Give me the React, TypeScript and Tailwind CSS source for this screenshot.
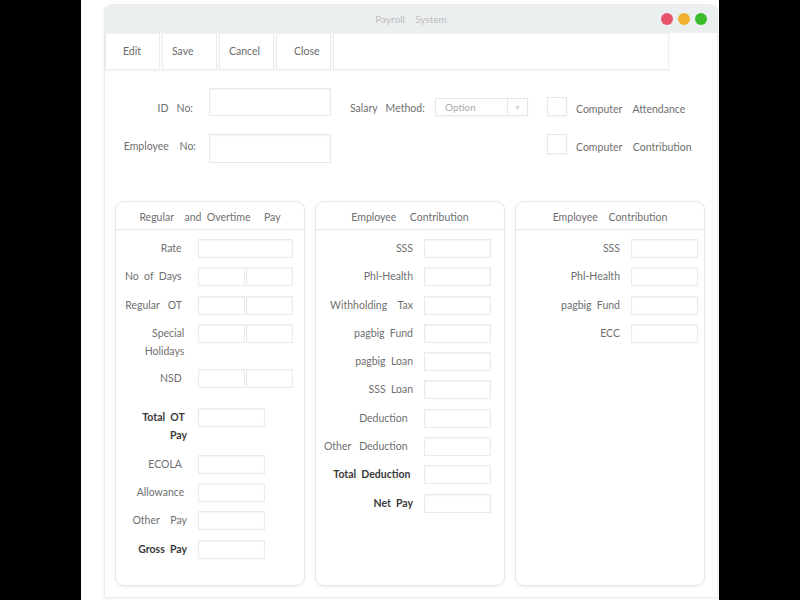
const font = { fontFamily: "Lato, 'Open Sans', sans-serif" };

type Row = {
  label: string;
  bold?: boolean;
  lines?: number;
  split?: boolean;
  small?: boolean;
  extra?: string;
};

const Box = ({ className }: { className: string }) => (
  <div
    className={`h-[19px] border border-[#ebebeb] bg-white shadow-[inset_0_1px_2px_rgba(0,0,0,0.05)] ${className}`}
  />
);

const regularRows: Row[] = [
  { label: "Rate  " },
  { label: "No  of  Days  ", split: true },
  { label: "Regular   OT  ", split: true },
  { label: "Special \nHolidays ", split: true, lines: 2 },
  { label: "NSD  ", split: true },
  { label: "Total  OT \n      Pay", bold: true, lines: 2, small: true, extra: "mt-[11px]" },
  { label: "ECOLA  ", small: true, extra: "mt-[1px]" },
  { label: "Allowance ", small: true },
  { label: "Other    Pay", small: true },
  { label: "Gross  Pay", bold: true, small: true },
];

const contributionRows: Row[] = [
  { label: "SSS" },
  { label: "Phl-Health" },
  { label: "Withholding    Tax" },
  { label: "pagbig  Fund" },
  { label: "pagbig  Loan" },
  { label: "SSS  Loan" },
  { label: "Deduction  " },
  { label: "Other   Deduction  " },
  { label: "Total  Deduction " },
  { label: "Net  Pay", bold: true },
];

const employerRows: Row[] = [
  { label: "SSS" },
  { label: "Phl-Health" },
  { label: "pagbig  Fund" },
  { label: "ECC" },
];

const Panel = ({
  title,
  rows,
  labelWidth,
  fieldWidth,
}: {
  title: string;
  rows: Row[];
  labelWidth: string;
  fieldWidth: string;
}) => (
  <div className="flex h-[385px] w-[190px] flex-col rounded-[9px] border border-[#e9e9e9] bg-white shadow-[0_1px_3px_rgba(0,0,0,0.07)]">
    <div className="flex h-[28px] items-center justify-center whitespace-pre border-b border-[#ebebeb] pt-[4px] text-[10.5px] text-[#6f6f6f]">
      {title}
    </div>
    <div className="flex flex-col gap-[9.3px] pt-[9px]">
      {rows.map((row) => (
        <div key={row.label} className={`flex items-start ${row.extra ?? ""}`}>
          <div
            className={`${labelWidth} shrink-0 whitespace-pre pr-[11px] text-right text-[10.5px] ${row.lines === 2 ? "leading-[18px]" : "leading-[19px]"} ${row.bold || row.label.startsWith("Total") ? "font-bold text-[#3a3a3a]" : "text-[#6f6f6f]"}`}
          >
            {row.label}
          </div>
          {row.split ? (
            <div className="flex gap-px">
              <Box className="w-[47px]" />
              <Box className="w-[47px]" />
            </div>
          ) : (
            <Box className={row.small ? "w-[67px]" : fieldWidth} />
          )}
        </div>
      ))}
    </div>
  </div>
);

const toolbar = [
  { name: "Edit", pad: "pl-[17px]" },
  { name: "Save", pad: "pl-[9px]" },
  { name: "Cancel", pad: "pl-[9px]" },
  { name: "Close", pad: "pl-[17px]" },
];

export default function App() {
  return (
    <div className="flex h-[600px] w-[800px] justify-center bg-black" style={font}>
      <div className="h-[600px] w-[638px] bg-white pl-[23px] pr-[1px] pt-[4px]">
        <div className="flex h-[594px] flex-col rounded-t-[7px] border border-[#e9ecec] bg-white shadow-[0_1px_3px_rgba(0,0,0,0.06)]">
          {/* title bar */}
          <div className="relative flex h-[28px] shrink-0 items-center justify-center rounded-t-[7px] bg-[#eceff0]">
            <span className="whitespace-pre text-[10px] text-[#bdbdbd]">Payroll    System</span>
            <div className="absolute right-[10px] top-[8px] flex gap-[5px]">
              <div className="h-[12px] w-[12px] rounded-full bg-[#e9546b]" />
              <div className="h-[12px] w-[12px] rounded-full bg-[#f0b12e]" />
              <div className="h-[12px] w-[12px] rounded-full bg-[#3cbc2c]" />
            </div>
          </div>

          {/* toolbar */}
          <div className="flex h-[37px] shrink-0 gap-[2px]">
            {toolbar.map((item) => (
              <button
                type="button"
                key={item.name}
                className={`flex h-[37px] w-[55px] items-center border border-[#ececec] bg-white text-[10.5px] text-[#6a6a6a] shadow-[0_1px_2px_rgba(0,0,0,0.06)] ${item.pad}`}
              >
                {item.name}
              </button>
            ))}
            <div className="h-[37px] w-[336px] border border-[#ececec] bg-white shadow-[0_1px_2px_rgba(0,0,0,0.06)]" />
          </div>

          {/* header form */}
          <div className="flex flex-col pt-[18px] text-[10.5px] text-[#6f6f6f]">
            <div className="flex items-start">
              <div className="mt-[12px] w-[92px] whitespace-pre pr-[4px] text-right leading-[16px]">ID   No:</div>
              <div className="ml-[12px] h-[28px] w-[122px] border border-[#e8e8e8] shadow-[inset_0_1px_2px_rgba(0,0,0,0.05)]" />
              <div className="ml-[19px] mt-[12px] w-[85px] whitespace-pre leading-[16px]">Salary   Method:</div>
              <div className="mt-[10px] flex h-[18px] w-[93px] border border-[#e8e8e8] shadow-[0_1px_2px_rgba(0,0,0,0.05)]">
                <div className="flex flex-1 items-center pl-[9px] text-[10px] text-[#a8a8a8]">Option</div>
                <div className="flex w-[20px] items-center justify-center border-l border-[#e8e8e8] text-[7px] text-[#d0d0d0]">
                  ▼
                </div>
              </div>
              <div className="ml-[19px] mt-[9px] h-[19px] w-[20px] border border-[#e8e8e8] shadow-[0_1px_2px_rgba(0,0,0,0.05)]" />
              <div className="ml-[9px] mt-[13px] whitespace-pre leading-[16px]">Computer    Attendance</div>
            </div>
            <div className="mt-[17px] flex items-start">
              <div className="mt-[4px] w-[92px] whitespace-pre pr-[1px] text-right leading-[16px]">Employee    No:</div>
              <div className="ml-[12px] h-[29px] w-[122px] border border-[#e8e8e8] shadow-[inset_0_1px_2px_rgba(0,0,0,0.05)]" />
              <div className="ml-[216px] h-[20px] w-[20px] border border-[#e8e8e8] shadow-[0_1px_2px_rgba(0,0,0,0.05)]" />
              <div className="ml-[9px] mt-[5px] whitespace-pre leading-[16px]">Computer    Contribution</div>
            </div>
          </div>

          {/* panels */}
          <div className="mt-[38px] flex gap-[10px] pl-[10px]">
            <Panel
              title={"Regular    and  Overtime     Pay"}
              rows={regularRows}
              labelWidth="w-[82px]"
              fieldWidth="w-[95px]"
            />
            <Panel
              title={"Employee     Contribution"}
              rows={contributionRows}
              labelWidth="w-[108px]"
              fieldWidth="w-[67px]"
            />
            <Panel
              title={"Employee    Contribution"}
              rows={employerRows}
              labelWidth="w-[115px]"
              fieldWidth="w-[67px]"
            />
          </div>
        </div>
      </div>
    </div>
  );
}
